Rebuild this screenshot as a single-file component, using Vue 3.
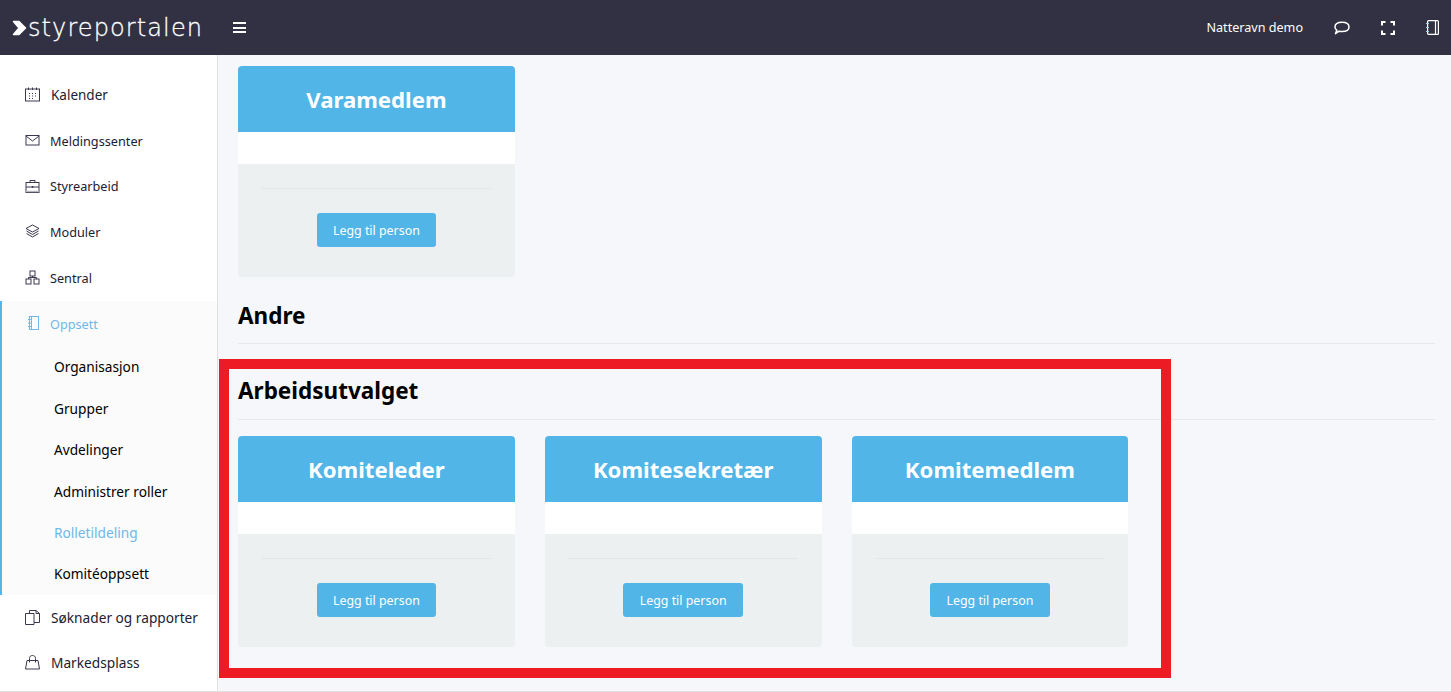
<script setup>
const menuTop = [
  { label: 'Kalender', icon: 'calendar', wide: true },
  { label: 'Meldingssenter', icon: 'mail' },
  { label: 'Styrearbeid', icon: 'briefcase' },
  { label: 'Moduler', icon: 'layers' },
  { label: 'Sentral', icon: 'network' },
]

const subMenu = [
  { label: 'Organisasjon' },
  { label: 'Grupper' },
  { label: 'Avdelinger' },
  { label: 'Administrer roller' },
  { label: 'Rolletildeling', active: true },
  { label: 'Komitéoppsett' },
]

const menuBottom = [
  { label: 'Søknader og rapporter', icon: 'docs' },
  { label: 'Markedsplass', icon: 'bag' },
]

const committee = ['Komiteleder', 'Komitesekretær', 'Komitemedlem']
</script>

<template>
  <div class="shell">
    <header class="topbar">
      <div class="logo">
        <svg class="logo-mark" width="15" height="16" viewBox="0 0 15 16">
          <path d="M1.5 1.5 L7 1.5 L13.5 8 L7 14.5 L1.5 14.5 L7 8 Z" fill="#fff" stroke="#fff" stroke-width="1.5" stroke-linejoin="round" />
        </svg>
        <span class="logo-text">styreportalen</span>
      </div>
      <button class="hamburger" aria-label="Meny">
        <span></span><span></span><span></span>
      </button>
      <div class="top-right">
        <span class="user">Natteravn demo</span>
        <svg class="top-icon" width="16" height="14" viewBox="0 0 16 14" fill="none" stroke="#fff" stroke-width="1.5">
          <path d="M8 1.2 C12 1.2 15 3 15 6 C15 9 12 10.6 8 10.6 C7 10.6 6 10.5 5 10.2 L1.5 12.6 L2.8 9.2 C1.6 8.4 1 7.3 1 6 C1 3 4 1.2 8 1.2 Z" stroke-linejoin="round" />
        </svg>
        <svg class="top-icon" width="14" height="14" viewBox="0 0 14 14" fill="none" stroke="#fff" stroke-width="2">
          <path d="M1 4.5 V1 H4.5 M9.5 1 H13 V4.5 M13 9.5 V13 H9.5 M4.5 13 H1 V9.5" />
        </svg>
        <svg class="top-icon" width="13" height="15" viewBox="0 0 13 15" fill="none" stroke="#fff" stroke-width="1.2">
          <rect x="1.6" y="0.6" width="10.8" height="13.8" rx="1" />
          <path d="M9.5 0.6 V14.4" />
          <path d="M0 3.5 H3 M0 7.5 H3 M0 11.5 H3" stroke="#9fd4f2" />
        </svg>
      </div>
    </header>

    <div class="body">
      <aside class="sidebar">
        <nav class="menu">
          <a v-for="item in menuTop" :key="item.label" class="menu-item" :class="{ wide: item.wide }">
            <svg class="menu-icon" width="15" height="15" viewBox="0 0 15 15" fill="none" stroke="#3a3850" stroke-width="1">
              <template v-if="item.icon === 'calendar'">
                <rect x="0.5" y="2" width="14" height="12" />
                <path d="M3.5 0.5 V3 M7.5 0.5 V3 M11.5 0.5 V3" />
                <path d="M4 6.5 H5 M7 6.5 H8 M10 6.5 H11 M4 9 H5 M7 9 H8 M10 9 H11 M4 11.5 H5 M7 11.5 H8" stroke-width="1.2" />
              </template>
              <template v-else-if="item.icon === 'mail'">
                <rect x="1" y="2.5" width="13" height="9.5" />
                <path d="M1 3 L7.5 8 L14 3" />
              </template>
              <template v-else-if="item.icon === 'briefcase'">
                <rect x="1" y="3.5" width="13" height="10" />
                <path d="M5 3.5 V1.5 H10 V3.5 M1 8 H14" />
                <path d="M7.5 7 V9" stroke-width="1.5" />
                <path d="M1 12.5 H14" stroke="#b5b5bd" stroke-width="1.4" />
              </template>
              <template v-else-if="item.icon === 'layers'">
                <path d="M7.5 1 L14 4.5 L7.5 8 L1 4.5 Z" />
                <path d="M1.5 7 L7.5 10.5 L13.5 7 M1.5 9.5 L7.5 13 L13.5 9.5" />
              </template>
              <template v-else>
                <rect x="5" y="1" width="5" height="5" />
                <rect x="1" y="9" width="5" height="5" />
                <rect x="9" y="9" width="5" height="5" />
                <path d="M7.5 6 V7.5 M3.5 9 V7.5 H11.5 V9" />
              </template>
            </svg>
            <span>{{ item.label }}</span>
          </a>

          <div class="menu-open">
            <a class="menu-item current">
              <svg class="menu-icon" width="15" height="15" viewBox="0 0 15 15" fill="none" stroke="#6fb8ec" stroke-width="1">
                <rect x="4.5" y="0.5" width="9" height="13" />
                <path d="M6.5 0.5 V13.5" />
                <path d="M3 3.5 H6 M3 7 H6 M3 10.5 H6" />
              </svg>
              <span>Oppsett</span>
            </a>
            <a v-for="sub in subMenu" :key="sub.label" class="sub-item" :class="{ active: sub.active }">{{ sub.label }}</a>
          </div>

          <a v-for="item in menuBottom" :key="item.label" class="menu-item bottom">
            <svg class="menu-icon" width="15" height="15" viewBox="0 0 15 15" fill="none" stroke="#3a3850" stroke-width="1">
              <template v-if="item.icon === 'docs'">
                <path d="M0.5 3.5 H9 V14.5 H0.5 Z" />
                <path d="M4.5 3.5 V0.5 H11 L14.5 3.5 V12.5 H9" />
                <path d="M11 0.5 V3.5 H14.5" />
              </template>
              <template v-else>
                <path d="M2 5.5 H13 L14.5 14 H0.5 Z" />
                <path d="M4.5 7.5 V3.5 C4.5 1.5 5.7 0.5 7.5 0.5 C9.3 0.5 10.5 1.5 10.5 3.5 V7.5" />
              </template>
            </svg>
            <span>{{ item.label }}</span>
          </a>
        </nav>
      </aside>

      <main class="content">
        <div class="cards">
          <div class="card">
            <div class="card-head">Varamedlem</div>
            <div class="card-blank"></div>
            <div class="card-foot">
              <hr />
              <button class="add-btn">Legg til person</button>
            </div>
          </div>
        </div>

        <section class="group first">
          <h2>Andre</h2>
        </section>

        <section class="group">
          <h2>Arbeidsutvalget</h2>
        </section>

        <div class="cards">
          <div v-for="role in committee" :key="role" class="card">
            <div class="card-head">{{ role }}</div>
            <div class="card-blank"></div>
            <div class="card-foot">
              <hr />
              <button class="add-btn">Legg til person</button>
            </div>
          </div>
        </div>

        <div class="annotation"></div>
      </main>
    </div>
  </div>
</template>

<style scoped>
.shell {
  height: 692px;
  display: flex;
  flex-direction: column;
  overflow: hidden;
  font-family: "Noto Sans", "Open Sans", sans-serif;
  color: #000;
}

.topbar {
  height: 55px;
  flex: none;
  display: flex;
  align-items: center;
  background: #323144;
  color: #fff;
}

.logo {
  width: 233px;
  display: flex;
  align-items: center;
  padding-left: 12px;
  box-sizing: border-box;
}

.logo-text {
  font-family: "DejaVu Sans", sans-serif;
  font-weight: 200;
  font-size: 24px;
  letter-spacing: 1.1px;
  line-height: 30px;
  margin-left: 1px;
  -webkit-text-stroke: 0.3px #fff;
}

.hamburger {
  width: 13px;
  height: 11px;
  padding: 0;
  border: 0;
  background: none;
  display: flex;
  flex-direction: column;
  justify-content: space-between;
}

.hamburger span {
  display: block;
  height: 2px;
  background: #fff;
}

.top-right {
  margin-left: auto;
  display: flex;
  align-items: center;
  padding-right: 12px;
}

.user {
  font-size: 12.6px;
  margin-right: 31px;
}

.top-icon + .top-icon {
  margin-left: 31px;
}

.body {
  flex: 1;
  min-height: 0;
  display: flex;
}

.sidebar {
  width: 218px;
  flex: none;
  box-sizing: border-box;
  background: #fff;
  border-right: 1px solid #e0e0e3;
  border-bottom: 1px solid #e0e0e3;
}

.menu {
  padding-top: 17px;
}

.menu-item {
  height: 45.7px;
  display: flex;
  align-items: center;
  gap: 10px;
  padding-left: 25px;
  font-size: 12.7px;
  color: #1d2030;
}

.menu-item.wide,
.menu-item.bottom {
  gap: 11px;
  font-size: 13.5px;
}

.menu-item.bottom {
  height: 45.4px;
  font-size: 13.7px;
}

.menu-icon {
  flex: none;
}

.menu-open {
  margin-top: 0.6px;
  background: #fbfbfb;
  border-left: 2px solid #52b5e7;
}

.menu-item.current {
  height: 45.2px;
  padding-left: 23px;
  color: #6fb8ec;
}

.sub-item {
  display: flex;
  align-items: center;
  height: 41.4px;
  padding-left: 52px;
  font-size: 13.7px;
  color: #000;
}

.sub-item.active {
  color: #6fb8ec;
}

.content {
  flex: 1;
  min-width: 0;
  position: relative;
  box-sizing: border-box;
  padding: 11px 16px 0 20px;
  background: #f5f7fb;
  border-bottom: 1px solid #e0e0e3;
}

.cards {
  display: grid;
  grid-template-columns: repeat(4, 1fr);
  gap: 30px;
}

.card {
  border-radius: 4px;
  overflow: hidden;
}

.card-head {
  height: 66px;
  box-sizing: border-box;
  padding-top: 1px;
  display: flex;
  align-items: center;
  justify-content: center;
  background: #52b5e7;
  color: #fff;
  font-size: 22.2px;
  font-weight: 700;
}

.card-blank {
  height: 32px;
  background: #fff;
}

.card-foot {
  height: 113px;
  box-sizing: border-box;
  padding: 24px 23.5px 0;
  background: #edf0f1;
  text-align: center;
}

.card-foot hr {
  margin: 0 0 24px;
  border: 0;
  border-top: 1px solid #e2e6e8;
}

.add-btn {
  width: 119.6px;
  height: 34px;
  padding: 0;
  border: 0;
  border-radius: 3px;
  background: #52b5e7;
  color: #fff;
  font-family: inherit;
  font-size: 12.4px;
}

.group {
  height: 76px;
  box-sizing: border-box;
  border-bottom: 1px solid #e6e8ee;
  display: flex;
  align-items: flex-end;
  padding-bottom: 11px;
}

.group.first {
  height: 67px;
  padding-bottom: 10px;
}

.group + .cards {
  margin-top: 16px;
}

.group h2 {
  margin: 0;
  font-size: 22.5px;
  font-weight: 700;
  line-height: 34px;
}

.annotation {
  position: absolute;
  left: 1px;
  top: 304px;
  width: 952px;
  height: 319px;
  box-sizing: border-box;
  border: 10px solid #ed1c24;
  pointer-events: none;
}
</style>

<style>
html,
body {
  margin: 0;
  overflow: hidden;
}
</style>
